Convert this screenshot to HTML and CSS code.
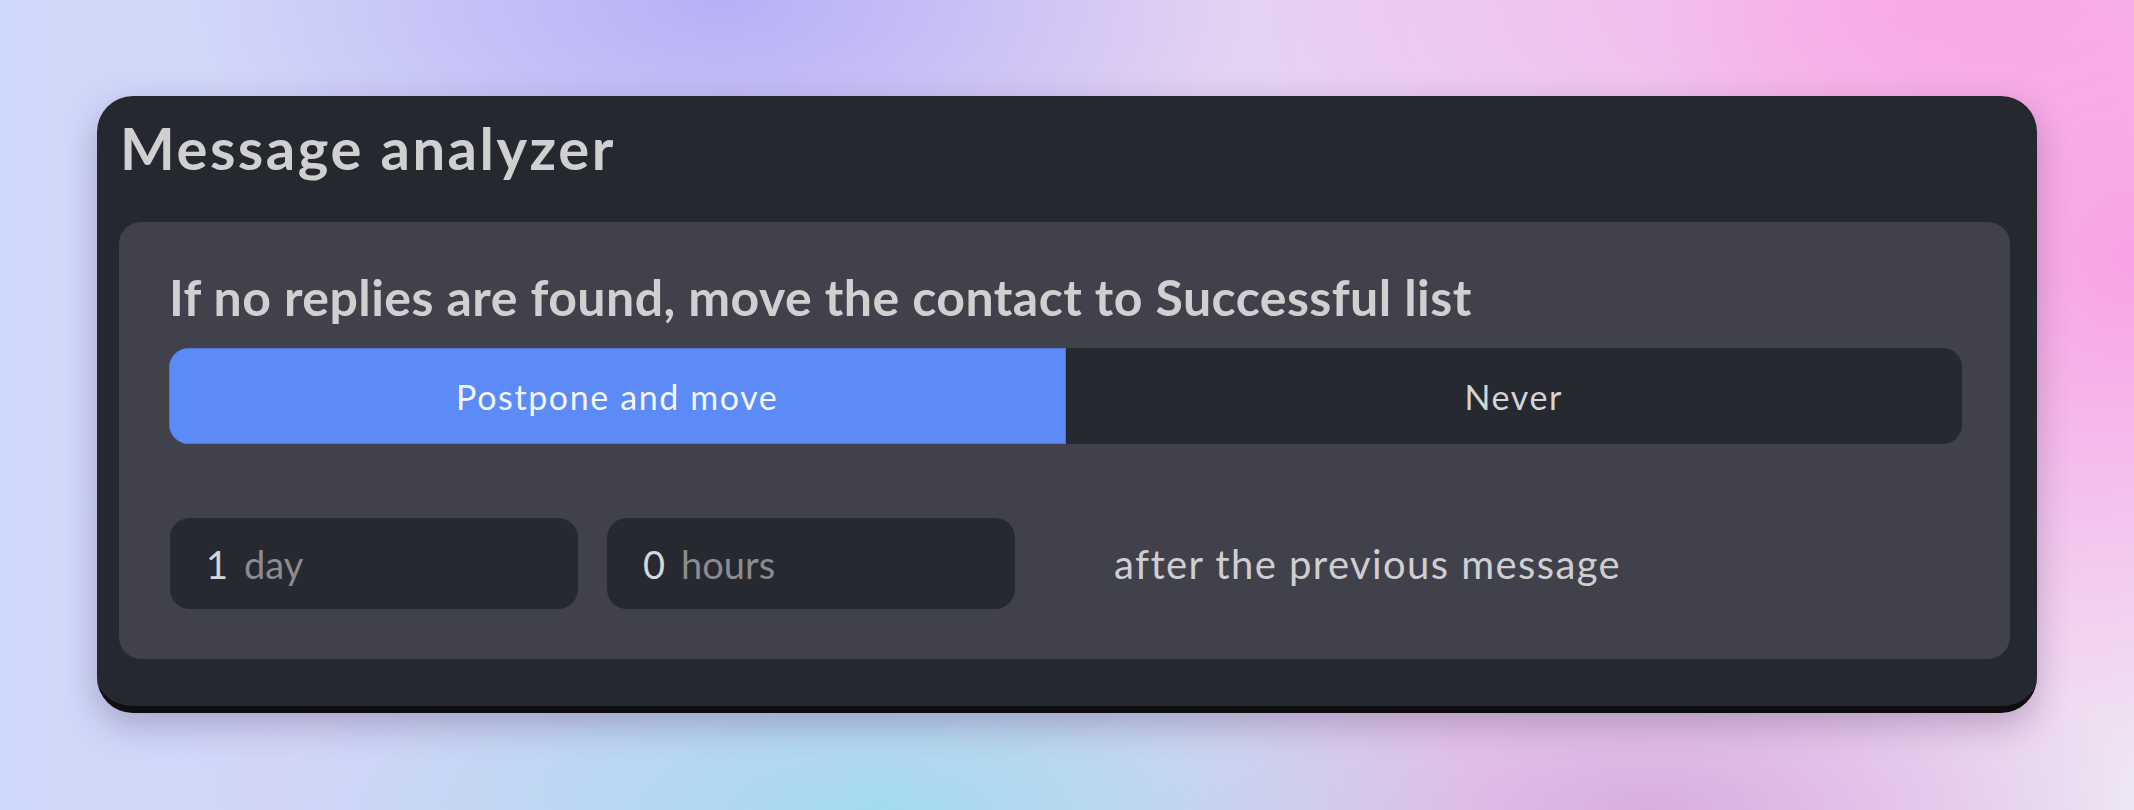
FILE: index.html
```html
<!DOCTYPE html>
<html lang="en">
<head>
<meta charset="utf-8">
<title>Message analyzer</title>
<link rel="stylesheet" href="styles.css">
</head>
<body>
<main class="stage">
  <section class="card">
    <h1 class="card-title">Message analyzer</h1>
    <div class="panel">
      <h2 class="panel-title">If no replies are found, move the contact to Successful list</h2>
      <div class="segmented">
        <button class="segment segment-active" type="button">Postpone and move</button>
        <button class="segment" type="button">Never</button>
      </div>
      <div class="delay-row">
        <label class="field"><span class="field-value">1</span><span class="field-unit">day</span></label>
        <label class="field"><span class="field-value">0</span><span class="field-unit">hours</span></label>
        <span class="delay-text">after the previous message</span>
      </div>
    </div>
  </section>
</main>
</body>
</html>
```
FILE: styles.css
```css
* { box-sizing: border-box; }
html, body { margin: 0; padding: 0; }
body {
  width: 2134px;
  height: 810px;
  overflow: hidden;
  font-family: Lato, "Noto Sans", sans-serif;
  background:
    radial-gradient(ellipse 520px 520px at 2134px 260px, rgba(250,158,228,0.95) 0%, rgba(250,158,228,0) 100%),
    radial-gradient(ellipse 700px 300px at 1950px 0px, rgba(248,168,230,0.9) 0%, rgba(248,168,230,0) 100%),
    radial-gradient(ellipse 520px 260px at 720px 0px, rgba(184,176,247,1) 0%, rgba(184,176,247,0) 100%),
    radial-gradient(ellipse 600px 220px at 880px 810px, rgba(163,219,239,1) 0%, rgba(163,219,239,0) 100%),
    radial-gradient(ellipse 500px 200px at 1650px 810px, rgba(214,170,222,0.9) 0%, rgba(214,170,222,0) 100%),
    linear-gradient(90deg, #cfd9fa 0%, #d6d2f6 35%, #e6d2f2 60%, #eedaf2 85%, #eee8f5 100%);
}
.stage {
  padding: 96px 0 0 97px;
}
.card {
  width: 1940px;
  background: #262830;
  border-radius: 36px;
  border-bottom: 7px solid #0e0e10;
  padding: 17px 27px 47px 22px;
  box-shadow: 0 12px 34px rgba(60, 30, 80, 0.28);
}
.card-title {
  margin: 0 0 39px 0;
  padding-left: 1px;
  font-size: 58px;
  line-height: 70px;
  font-weight: 700;
  color: #d0d0d0;
  letter-spacing: 2.5px;
}
.panel {
  background: #41414b;
  border-radius: 22px;
  padding: 45px 48px 50px 50px;
}
.panel-title {
  margin: 0 0 21px 0;
  font-size: 50px;
  line-height: 60px;
  font-weight: 700;
  color: #d0d0d0;
  letter-spacing: 0.45px;
}
.segmented {
  display: flex;
  height: 96px;
  border-radius: 20px;
  overflow: hidden;
  background: #272931;
}
.segment {
  flex: 1 1 0;
  border: 0;
  margin: 0;
  padding: 0;
  background: #272931;
  font-family: Lato, "Noto Sans", sans-serif;
  font-size: 34px;
  font-weight: 400;
  color: #d4d4d6;
  letter-spacing: 1.6px;
}
.segment-active {
  background: #5c8af7;
  color: #f4f6ff;
  box-shadow: inset 0 0 0 1px #5177d8;
}
.delay-row {
  display: flex;
  align-items: center;
  margin-top: 74px;
}
.field {
  display: flex;
  align-items: center;
  width: 408px;
  height: 91px;
  background: #272931;
  border-radius: 20px;
  padding-left: 36px;
  margin-right: 29px;
  font-size: 38px;
}
.field:first-child { margin-left: 1px; }
.field-value {
  color: #d6d6d8;
}
.field-unit {
  margin-left: 16px;
  color: #8b8b90;
}
.delay-text {
  margin-left: 70px;
  font-size: 40px;
  color: #cfcfd2;
  letter-spacing: 1.4px;
}
```
